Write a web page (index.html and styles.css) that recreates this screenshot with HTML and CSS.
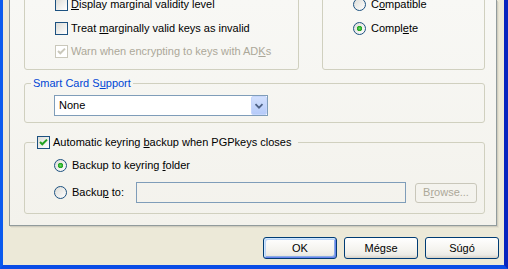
FILE: index.html
```html
<!DOCTYPE html>
<html>
<head>
<meta charset="utf-8">
<link rel="stylesheet" href="styles.css">
</head>
<body>
<div class="window">
  <div class="tabpage">
    <div class="toprow">
      <fieldset class="group top-left">
        <div class="opt row1"><span class="cb"></span><span><u>D</u>isplay marginal validity level</span></div>
        <div class="opt row2"><span class="cb"></span><span>Treat <u>m</u>arginally valid keys as invalid</span></div>
        <div class="opt row3 disabled"><span class="cb checked dis"><svg viewBox="0 0 11 11"><path d="M2 5 L4.3 7.3 L9 2.6"/></svg></span><span>Warn when encrypting to keys with AD<u>K</u>s</span></div>
      </fieldset>
      <fieldset class="group top-right">
        <div class="opt ropt row1"><span class="rb"></span><span>C<u>o</u>mpatible</span></div>
        <div class="opt ropt row2"><span class="rb on"></span><span>Compl<u>e</u>te</span></div>
      </fieldset>
    </div>

    <fieldset class="group smart">
      <legend class="title">Smart Card S<u>u</u>pport</legend>
      <div class="gbody">
        <div class="combo">
          <span class="combo-text">None</span>
          <span class="combo-btn"><svg viewBox="0 0 16 19"><path d="M4 8 L8 12 L12 8"/></svg></span>
        </div>
      </div>
    </fieldset>

    <fieldset class="group backup">
      <legend class="chk-legend">
        <span class="opt"><span class="cb checked"><svg viewBox="0 0 11 11"><path d="M2 5 L4.3 7.3 L9 2.6"/></svg></span><span>Automatic keyring <u>b</u>ackup when PGPkeys closes</span></span>
      </legend>
      <div class="gbody">
        <div class="opt ropt brow1"><span class="rb on"></span><span>Backup to keyring <u>f</u>older</span></div>
        <div class="brow2">
          <div class="opt ropt blabel"><span class="rb"></span><span>Backu<u>p</u> to:</span></div>
          <div class="textbox"></div>
          <div class="browse">B<u>r</u>owse...</div>
        </div>
      </div>
    </fieldset>
  </div>

  <div class="buttons">
    <div class="btn default">OK</div>
    <div class="btn">Mégse</div>
    <div class="btn">Súgó</div>
  </div>
</div>
</body>
</html>
```

FILE: styles.css
```css
html, body {
  margin: 0;
  padding: 0;
  background: #0019A0;
  overflow: hidden;
}
body {
  font: 11px/13px "Liberation Sans", Arial, sans-serif;
  color: #000;
}
u {
  text-decoration-thickness: 1px;
  text-underline-offset: 1px;
}
.window {
  box-sizing: border-box;
  width: 508px;
  height: 269px;
  background: #ECE9D8;
  border-left: 3px solid #0A5AEE;
  border-right: 4px solid #0824BE;
  border-bottom: 4px solid #0A4CE6;
  padding: 0 5px 6px 6px;
  display: flex;
  flex-direction: column;
}
.tabpage {
  margin-right: 2px;
  border: 1px solid #919B9C;
  border-top: none;
  background: linear-gradient(#F8F8F5, #F3F2EC);
  box-shadow: 1px 1px 0 #D0CDBF, 2px 2px 0 #E3E0D0;
  padding: 0 11px 11px 14px;
}
.toprow {
  margin-top: -20px;
  display: grid;
  grid-template-columns: 275px 163px;
  justify-content: space-between;
}
.group {
  margin: 0;
  padding: 0;
  border: 1px solid #D0D0BF;
  border-radius: 3px;
  min-width: 0;
}
.top-left, .top-right {
  padding: 17px 0 11px 30px;
}
.opt {
  display: flex;
  align-items: center;
  height: 13px;
  gap: 3px;
  white-space: nowrap;
}
.ropt { gap: 5px; }
.row2 { margin-top: 11px; }
.row3 { margin-top: 10px; }
.disabled { color: #ACA899; }

.cb {
  box-sizing: border-box;
  width: 13px;
  height: 13px;
  flex: none;
  border: 1px solid #1C5180;
  background: linear-gradient(135deg, #DCDCD7, #FFFFFF);
  display: flex;
  align-items: center;
  justify-content: center;
}
.cb svg {
  width: 11px;
  height: 11px;
  display: block;
}
.cb svg path {
  fill: none;
  stroke: #21A121;
  stroke-width: 2;
}
.cb.dis {
  border-color: #CAC8BB;
  background: #FFFFFF;
}
.cb.dis svg path { stroke: #CAC8BB; }

.rb {
  box-sizing: border-box;
  width: 13px;
  height: 13px;
  flex: none;
  border: 1px solid #1C5180;
  border-radius: 50%;
  background: linear-gradient(135deg, #DCDCD7, #FFFFFF);
}
.rb.on {
  background:
    radial-gradient(circle at 50% 50%, #6EDB6B 0, #3FBF3C 1.2px, #21A121 2.4px, rgba(33,161,33,0) 3px),
    linear-gradient(135deg, #DCDCD7, #FFFFFF);
}

.title {
  margin-left: 6px;
  padding: 0 2px;
  color: #0046D5;
  line-height: 13px;
}
.gbody {
  padding-left: 29px;
}
.smart {
  margin-top: 7px;
  padding: 5px 0 6px 0;
}
.combo {
  box-sizing: border-box;
  width: 214px;
  height: 21px;
  border: 1px solid #7F9DB9;
  background: #FFFFFF;
  display: flex;
  align-items: center;
}
.combo-text {
  flex: 1;
  padding-left: 4px;
}
.combo-btn {
  box-sizing: border-box;
  width: 16px;
  height: 19px;
  align-self: stretch;
  border: 1px solid #C6D6FC;
  border-radius: 2px;
  background: linear-gradient(#D2E0FD, #B6CBF9);
  display: block;
}
.combo-btn svg {
  display: block;
  width: 14px;
  height: 17px;
}
.combo-btn svg path {
  fill: none;
  stroke: #4D6185;
  stroke-width: 2;
}

.backup {
  margin-top: 13px;
  padding: 10px 0 10px 0;
}
.chk-legend {
  margin-left: 10px;
  padding: 0 7px 0 2px;
  line-height: 13px;
}
.brow2 {
  margin-top: 10px;
  display: flex;
  align-items: center;
}
.blabel { width: 82px; }
.textbox {
  box-sizing: border-box;
  width: 270px;
  height: 21px;
  border: 1px solid #7F9DB9;
}
.browse {
  box-sizing: border-box;
  margin-left: 9px;
  width: 62px;
  height: 20px;
  border: 1px solid #C9C7BA;
  border-radius: 3px;
  color: #ACA899;
  display: flex;
  align-items: center;
  justify-content: center;
}

.buttons {
  margin-top: 11px;
  display: flex;
  justify-content: flex-end;
  gap: 7px;
}
.btn {
  box-sizing: border-box;
  width: 74px;
  height: 22px;
  border: 1px solid #003C74;
  border-radius: 3px;
  background: linear-gradient(#FFFFFF, #F4F3EE 60%, #ECEBE6 85%, #D6D0C5);
  display: flex;
  align-items: center;
  justify-content: center;
}
.btn.default {
  box-shadow: inset 1px 1px 0 #CEE7FF, inset -1px -1px 0 #6982EE, inset 2px 2px 0 #BCD4F6, inset -2px -2px 0 #89ADE4;
}
```
